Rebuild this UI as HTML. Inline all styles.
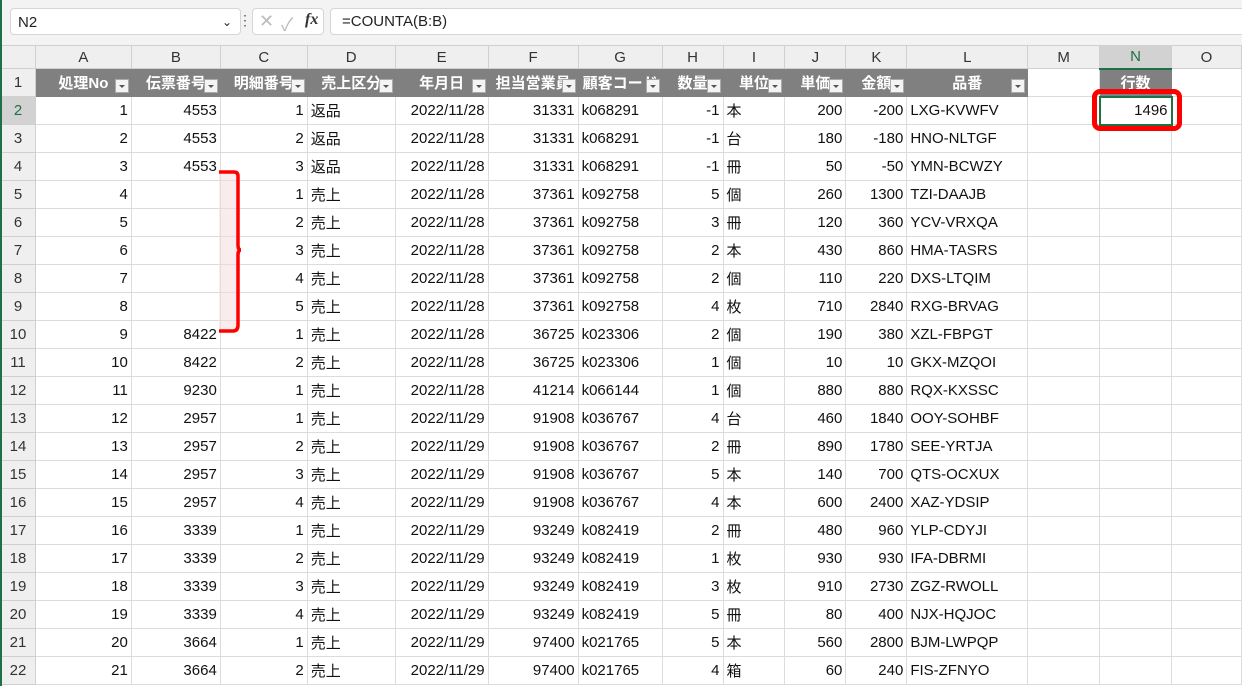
<!DOCTYPE html>
<html><head><meta charset="utf-8"><style>
body{margin:0;width:1242px;height:686px;overflow:hidden;background:#fff;font-family:"Liberation Sans","Noto Sans CJK JP",sans-serif;position:relative}
.top{position:absolute;left:0;top:0;width:1242px;height:45px;background:#f3f3f3}
.nb{position:absolute;left:10px;top:8px;width:231px;height:27px;background:#fff;border:1px solid #d6d6d6;border-radius:4px;font-size:15px;line-height:27px;padding-left:7px;box-sizing:border-box;color:#222}
.fxb{position:absolute;left:252px;top:8px;width:72px;height:27px;background:#fff;border:1px solid #d6d6d6;border-radius:4px;box-sizing:border-box}
.fb{position:absolute;left:330px;top:8px;width:920px;height:27px;background:#fff;border:1px solid #d6d6d6;border-radius:4px;box-sizing:border-box;font-size:15px;line-height:26px;padding-left:11px;color:#222}
table{position:absolute;left:0;top:45px;border-collapse:collapse;table-layout:fixed;font-size:15px;color:#111}
td{height:28px;border:1px solid #dcdcdc;padding:0 3px;white-space:nowrap;overflow:hidden;box-sizing:border-box}
tr.ch td{height:23px;background:#efefef;text-align:center;color:#333;border-color:#d0d0d0}
td.rh{background:#efefef;text-align:center;color:#333;border-color:#d0d0d0}
tr.h td.g{background:#808080;color:#fff;font-weight:bold;border-color:#808080;position:relative;text-align:center}
.f{position:absolute;right:2px;bottom:3px;width:14px;height:14px;background:#f4f4f4;border:1px solid #aaa;box-sizing:border-box}
.f:after{content:"";position:absolute;left:3px;top:5px;border-left:3px solid transparent;border-right:3px solid transparent;border-top:3px solid #555}
.r{text-align:right}
</style></head><body>
<div style="position:absolute;left:0;top:0;width:2px;height:686px;background:#1e7145;z-index:5"></div>
<div class="top">
<div class="nb">N2<span style="position:absolute;right:8px;top:0;font-size:12px">&#8964;</span></div>
<div style="position:absolute;left:238px;top:12px;font-size:14px;color:#555">&#8942;</div>
<div class="fxb"><span style="position:absolute;left:6px;top:2px;color:#bbb;font-size:18px">&#10005;</span><span style="position:absolute;left:28px;top:2px;color:#bbb;font-size:18px">&#10003;</span><span style="position:absolute;left:52px;top:2px;font-style:italic;font-family:'Liberation Serif',serif;font-weight:bold;font-size:16px;color:#333">fx</span></div>
<div class="fb">=COUNTA(B:B)</div>
</div>
<table>
<colgroup><col style="width:35px"><col style="width:96px"><col style="width:89px"><col style="width:87px"><col style="width:88px"><col style="width:93px"><col style="width:90px"><col style="width:84px"><col style="width:61px"><col style="width:62px"><col style="width:61px"><col style="width:61px"><col style="width:121px"><col style="width:72px"><col style="width:72px"><col style="width:70px"></colgroup>
<tr class="ch"><td></td><td>A</td><td>B</td><td>C</td><td>D</td><td>E</td><td>F</td><td>G</td><td>H</td><td>I</td><td>J</td><td>K</td><td>L</td><td>M</td><td style="background:#d2d2d2;border-bottom:2px solid #1e7145;color:#1e7145">N</td><td>O</td></tr>
<tr class="h"><td class="rh">1</td><td class="g">処理No<span class="f"></span></td><td class="g">伝票番号<span class="f"></span></td><td class="g">明細番号<span class="f"></span></td><td class="g">売上区分<span class="f"></span></td><td class="g">年月日<span class="f"></span></td><td class="g">担当営業員<span class="f"></span></td><td class="g">顧客コード<span class="f"></span></td><td class="g">数量<span class="f"></span></td><td class="g">単位<span class="f"></span></td><td class="g">単価<span class="f"></span></td><td class="g">金額<span class="f"></span></td><td class="g">品番<span class="f"></span></td><td></td><td class="g">行数</td><td></td></tr>
<tr><td class="rh" style="background:#d2d2d2;color:#1e7145">2</td><td class="r">1</td><td class="r">4553</td><td class="r">1</td><td>返品</td><td class="r">2022/11/28</td><td class="r">31331</td><td>k068291</td><td class="r">-1</td><td>本</td><td class="r">200</td><td class="r">-200</td><td>LXG-KVWFV</td><td></td><td class="r" style="border:2px solid #1e7145">1496</td><td></td></tr>
<tr><td class="rh">3</td><td class="r">2</td><td class="r">4553</td><td class="r">2</td><td>返品</td><td class="r">2022/11/28</td><td class="r">31331</td><td>k068291</td><td class="r">-1</td><td>台</td><td class="r">180</td><td class="r">-180</td><td>HNO-NLTGF</td><td></td><td></td><td></td></tr>
<tr><td class="rh">4</td><td class="r">3</td><td class="r">4553</td><td class="r">3</td><td>返品</td><td class="r">2022/11/28</td><td class="r">31331</td><td>k068291</td><td class="r">-1</td><td>冊</td><td class="r">50</td><td class="r">-50</td><td>YMN-BCWZY</td><td></td><td></td><td></td></tr>
<tr><td class="rh">5</td><td class="r">4</td><td class="r"></td><td class="r">1</td><td>売上</td><td class="r">2022/11/28</td><td class="r">37361</td><td>k092758</td><td class="r">5</td><td>個</td><td class="r">260</td><td class="r">1300</td><td>TZI-DAAJB</td><td></td><td></td><td></td></tr>
<tr><td class="rh">6</td><td class="r">5</td><td class="r"></td><td class="r">2</td><td>売上</td><td class="r">2022/11/28</td><td class="r">37361</td><td>k092758</td><td class="r">3</td><td>冊</td><td class="r">120</td><td class="r">360</td><td>YCV-VRXQA</td><td></td><td></td><td></td></tr>
<tr><td class="rh">7</td><td class="r">6</td><td class="r"></td><td class="r">3</td><td>売上</td><td class="r">2022/11/28</td><td class="r">37361</td><td>k092758</td><td class="r">2</td><td>本</td><td class="r">430</td><td class="r">860</td><td>HMA-TASRS</td><td></td><td></td><td></td></tr>
<tr><td class="rh">8</td><td class="r">7</td><td class="r"></td><td class="r">4</td><td>売上</td><td class="r">2022/11/28</td><td class="r">37361</td><td>k092758</td><td class="r">2</td><td>個</td><td class="r">110</td><td class="r">220</td><td>DXS-LTQIM</td><td></td><td></td><td></td></tr>
<tr><td class="rh">9</td><td class="r">8</td><td class="r"></td><td class="r">5</td><td>売上</td><td class="r">2022/11/28</td><td class="r">37361</td><td>k092758</td><td class="r">4</td><td>枚</td><td class="r">710</td><td class="r">2840</td><td>RXG-BRVAG</td><td></td><td></td><td></td></tr>
<tr><td class="rh">10</td><td class="r">9</td><td class="r">8422</td><td class="r">1</td><td>売上</td><td class="r">2022/11/28</td><td class="r">36725</td><td>k023306</td><td class="r">2</td><td>個</td><td class="r">190</td><td class="r">380</td><td>XZL-FBPGT</td><td></td><td></td><td></td></tr>
<tr><td class="rh">11</td><td class="r">10</td><td class="r">8422</td><td class="r">2</td><td>売上</td><td class="r">2022/11/28</td><td class="r">36725</td><td>k023306</td><td class="r">1</td><td>個</td><td class="r">10</td><td class="r">10</td><td>GKX-MZQOI</td><td></td><td></td><td></td></tr>
<tr><td class="rh">12</td><td class="r">11</td><td class="r">9230</td><td class="r">1</td><td>売上</td><td class="r">2022/11/28</td><td class="r">41214</td><td>k066144</td><td class="r">1</td><td>個</td><td class="r">880</td><td class="r">880</td><td>RQX-KXSSC</td><td></td><td></td><td></td></tr>
<tr><td class="rh">13</td><td class="r">12</td><td class="r">2957</td><td class="r">1</td><td>売上</td><td class="r">2022/11/29</td><td class="r">91908</td><td>k036767</td><td class="r">4</td><td>台</td><td class="r">460</td><td class="r">1840</td><td>OOY-SOHBF</td><td></td><td></td><td></td></tr>
<tr><td class="rh">14</td><td class="r">13</td><td class="r">2957</td><td class="r">2</td><td>売上</td><td class="r">2022/11/29</td><td class="r">91908</td><td>k036767</td><td class="r">2</td><td>冊</td><td class="r">890</td><td class="r">1780</td><td>SEE-YRTJA</td><td></td><td></td><td></td></tr>
<tr><td class="rh">15</td><td class="r">14</td><td class="r">2957</td><td class="r">3</td><td>売上</td><td class="r">2022/11/29</td><td class="r">91908</td><td>k036767</td><td class="r">5</td><td>本</td><td class="r">140</td><td class="r">700</td><td>QTS-OCXUX</td><td></td><td></td><td></td></tr>
<tr><td class="rh">16</td><td class="r">15</td><td class="r">2957</td><td class="r">4</td><td>売上</td><td class="r">2022/11/29</td><td class="r">91908</td><td>k036767</td><td class="r">4</td><td>本</td><td class="r">600</td><td class="r">2400</td><td>XAZ-YDSIP</td><td></td><td></td><td></td></tr>
<tr><td class="rh">17</td><td class="r">16</td><td class="r">3339</td><td class="r">1</td><td>売上</td><td class="r">2022/11/29</td><td class="r">93249</td><td>k082419</td><td class="r">2</td><td>冊</td><td class="r">480</td><td class="r">960</td><td>YLP-CDYJI</td><td></td><td></td><td></td></tr>
<tr><td class="rh">18</td><td class="r">17</td><td class="r">3339</td><td class="r">2</td><td>売上</td><td class="r">2022/11/29</td><td class="r">93249</td><td>k082419</td><td class="r">1</td><td>枚</td><td class="r">930</td><td class="r">930</td><td>IFA-DBRMI</td><td></td><td></td><td></td></tr>
<tr><td class="rh">19</td><td class="r">18</td><td class="r">3339</td><td class="r">3</td><td>売上</td><td class="r">2022/11/29</td><td class="r">93249</td><td>k082419</td><td class="r">3</td><td>枚</td><td class="r">910</td><td class="r">2730</td><td>ZGZ-RWOLL</td><td></td><td></td><td></td></tr>
<tr><td class="rh">20</td><td class="r">19</td><td class="r">3339</td><td class="r">4</td><td>売上</td><td class="r">2022/11/29</td><td class="r">93249</td><td>k082419</td><td class="r">5</td><td>冊</td><td class="r">80</td><td class="r">400</td><td>NJX-HQJOC</td><td></td><td></td><td></td></tr>
<tr><td class="rh">21</td><td class="r">20</td><td class="r">3664</td><td class="r">1</td><td>売上</td><td class="r">2022/11/29</td><td class="r">97400</td><td>k021765</td><td class="r">5</td><td>本</td><td class="r">560</td><td class="r">2800</td><td>BJM-LWPQP</td><td></td><td></td><td></td></tr>
<tr><td class="rh">22</td><td class="r">21</td><td class="r">3664</td><td class="r">2</td><td>売上</td><td class="r">2022/11/29</td><td class="r">97400</td><td>k021765</td><td class="r">4</td><td>箱</td><td class="r">60</td><td class="r">240</td><td>FIS-ZFNYO</td><td></td><td></td><td></td></tr>
</table>
<div style="position:absolute;left:1092px;top:89px;width:90px;height:42px;border:5px solid #f00;border-radius:8px;box-sizing:border-box"></div>
<svg style="position:absolute;left:215px;top:165px" width="35" height="175"><rect x="4" y="7" width="18" height="160" fill="#f3dada" opacity=".5"/><path d="M4 7 H19 Q23 7 23 11 V80 Q23 85 26 85 Q23 85 23 90 V160 Q23 166 18 166 H4" fill="none" stroke="#f00" stroke-width="3.5"/></svg>
</body></html>
